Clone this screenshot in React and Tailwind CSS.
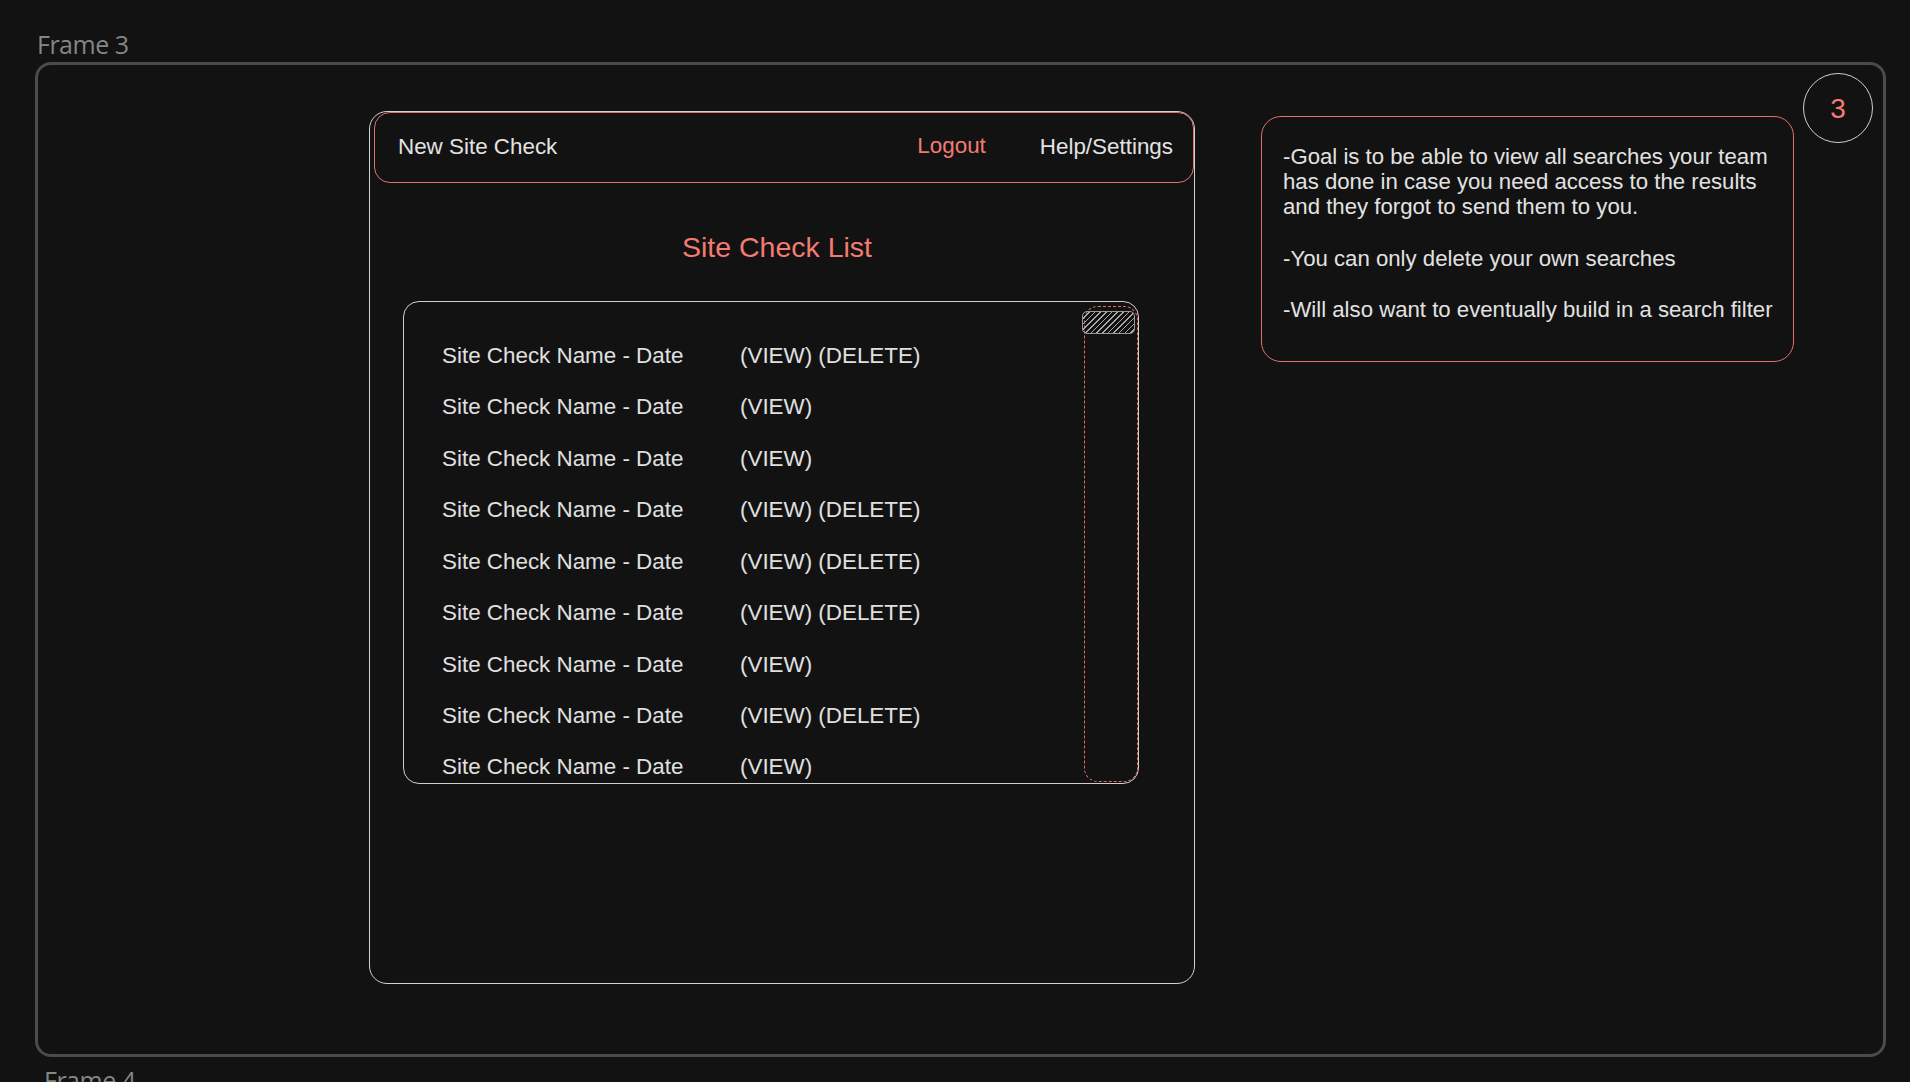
import React from 'react';

const checks = [
  { id: 1, canDelete: true },
  { id: 2, canDelete: false },
  { id: 3, canDelete: false },
  { id: 4, canDelete: true },
  { id: 5, canDelete: true },
  { id: 6, canDelete: true },
  { id: 7, canDelete: false },
  { id: 8, canDelete: true },
  { id: 9, canDelete: false },
];

function Header() {
  return (
    <div className="ml-[4px] flex h-[71px] items-center rounded-[16px] border border-[#e36f69] pl-[23px] pr-[20px] text-[22.4px] text-[#e2e2e2]">
      <span className="mt-[-2px]">New Site Check</span>
      <span className="ml-auto mt-[-4px] text-[#f47a72]">Logout</span>
      <span className="ml-[54px] mt-[-2px]">Help/Settings</span>
    </div>
  );
}

function CheckList() {
  return (
    <div className="ml-[33px] mt-[38px] flex h-[483px] w-[736px] overflow-hidden rounded-[16px] border border-[#cfcfcf]">
      <ul className="flex-1 pl-[38px] pt-[28px]">
        {checks.map((check) => (
          <li key={check.id} className="flex h-[51.45px] items-center text-[22.4px] text-[#e0e0e0]">
            <span className="w-[298px]">Site Check Name - Date</span>
            <span>{check.canDelete ? '(VIEW) (DELETE)' : '(VIEW)'}</span>
          </li>
        ))}
      </ul>
      {/* scrollbar */}
      <div className="mb-[1px] mt-[4px] w-[54px] rounded-[14px] border border-dashed border-[#e06c66] pt-[4px]">
        <div className="ml-[-3px] h-[23px] w-[53px] rounded-[5px] border border-[#9a9a9a] bg-[repeating-linear-gradient(135deg,#a8a8a8_0_1px,transparent_1px_4px)]" />
      </div>
    </div>
  );
}

function Panel() {
  return (
    <div className="ml-[331px] mt-[46px] flex h-[873px] w-[826px] flex-col rounded-[18px] border border-[#d2d2d2]">
      <Header />
      <h1 className="mt-[48px] pr-[10px] text-center text-[28.5px] leading-[32px] text-[#f47a72]">
        Site Check List
      </h1>
      <CheckList />
    </div>
  );
}

function Notes() {
  return (
    <div className="ml-[66px] mt-[51px] h-[246px] w-[533px] rounded-[20px] border border-[#e36f69] pl-[21px] pr-[8px] pt-[27px] text-[22.2px] leading-[25px] text-[#e2e2e2]">
      <p>
        -Goal is to be able to view all searches your team has done in case you need access to the results
        and they forgot to send them to you.
      </p>
      <p className="mt-[27px]">-You can only delete your own searches</p>
      <p className="mt-[26px]">-Will also want to eventually build in a search filter</p>
    </div>
  );
}

export default function App() {
  return (
    <div className="h-[1082px] w-full overflow-hidden bg-[#121212] font-['Liberation_Sans',Arial,sans-serif]">
      <div className="pl-[37px] pt-[29px] font-['Open_Sans',sans-serif] text-[25px] leading-[30px] tracking-[-0.5px] text-[#858585]">
        Frame 3
      </div>
      <div className="ml-[35px] mt-[3px] flex h-[995px] w-[1851px] items-start rounded-[16px] border-[3px] border-[#4b4b4b]">
        <Panel />
        <Notes />
        <div className="ml-[9px] mt-[8px] flex h-[70px] w-[70px] items-center justify-center rounded-full border border-[#cfcfcf] pt-[1px] text-[28px] text-[#f47a72]">
          3
        </div>
      </div>
      <div className="pl-[44px] pt-[8px] font-['Open_Sans',sans-serif] text-[25px] leading-[30px] tracking-[-0.5px] text-[#858585]">
        Frame 4
      </div>
    </div>
  );
}
